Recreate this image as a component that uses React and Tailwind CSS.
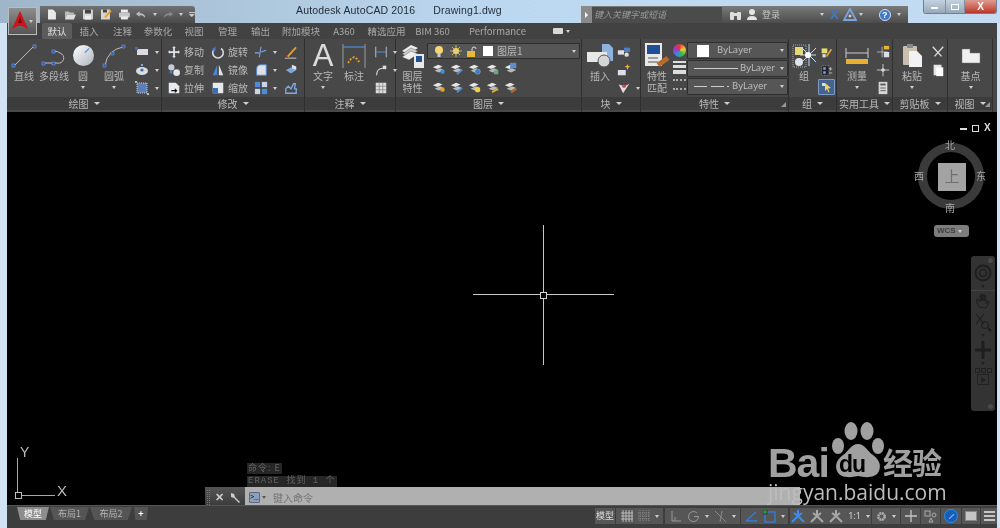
import React from 'react';

const cjk = { fontFamily: '"Noto Sans CJK SC", sans-serif' };

// ---- small drawn icons (all on a 16 unit box) ----
function Ico({ s = 16, children, className = '' }) {
  return (
    <svg width={s} height={s} viewBox="0 0 16 16" fill="none" className={`shrink-0 ${className}`}>
      {children}
    </svg>
  );
}

const stack = <><path d="M1 6l6-3 5 2-6 3z" fill="#e8e8e8" /><path d="M3 10l6-3 5 2-6 3z" fill="#bbb" /></>;

const icons = {
  rect: <><rect x="3" y="5" width="11" height="6" fill="#d8dde4" /><rect x="1" y="3" width="3" height="3" fill="#2f6fd0" /></>,
  ellipse: <><ellipse cx="8" cy="9" rx="6" ry="4" fill="#d8dde4" /><circle cx="8" cy="8" r="1.600" fill="#3d6fb8" /><rect x="7" y="2" width="2" height="2" fill="#7fa8e8" /></>,
  hatch: <><rect x="3" y="3" width="10" height="10" fill="#5c7fb8" stroke="#ccc" strokeDasharray="1 1" /><rect x="1" y="1" width="2" height="2" fill="#bbb" /><rect x="13" y="13" width="2" height="2" fill="#bbb" /></>,
  move: <path d="M8 1l2 2.500H9V7h3.500V6L15 8l-2.500 2V9H9v3.500h1L8 15l-2-2.500h1V9H3.500v1L1 8l2.500-2v1H7V3.500H6z" fill="#dfe4ea" />,
  rotate: <><path d="M11.500 4a6 6 0 1 1-7 0" stroke="#d5d9de" strokeWidth="1.800" /><path d="M5 1.500v5h-4z" fill="#3f7fd8" /></>,
  copy: <><circle cx="5" cy="5" r="3.500" fill="#c5ccd6" /><circle cx="11" cy="11" r="3.800" fill="#e3e6ea" /><rect x="3" y="9" width="3" height="3" fill="#3f7fd8" /></>,
  mirror: <><path d="M7 2v12H2z" fill="#4d86cf" /><path d="M9 2v12h5z" fill="#dfe3e8" /></>,
  stretch: <><path d="M2 2h8l4 4v8H2z" fill="#e8eaee" /><path d="M5 11h6m-2-2l2 2-2 2" stroke="#111" strokeWidth="1.300" /></>,
  scale: <><rect x="2" y="2" width="12" height="12" fill="#e5e8ec" /><rect x="2" y="8" width="6" height="6" fill="#3a6fb8" /></>,
  trim: <path d="M1 9h5M8 8l6-2M8 2l-2 12" stroke="#7ea9e6" strokeWidth="1.200" />,
  fillet: <path d="M3 14V7q0-5 5-5h6v12z" fill="#dde1e6" stroke="#4d86cf" />,
  array: <><rect x="1" y="1" width="6" height="6" fill="#4d8bdc" /><rect x="9" y="1" width="6" height="6" fill="#c8d5e6" /><rect x="1" y="9" width="6" height="6" fill="#c8d5e6" /><rect x="9" y="9" width="6" height="6" fill="#4d8bdc" /></>,
  eraser: <><path d="M3 13L13 2l1.500 1.500L5 14z" fill="#e6a23c" /><path d="M1 15h13" stroke="#ddd" /><path d="M2 11l3 3-3 .5z" fill="#a33" /></>,
  explode: <><path d="M2 8l6-3 6 3-6 4z" fill="#7ba7dc" /><path d="M9 2l5 2v4l-5-2z" fill="#dfe3e8" /></>,
  offset: <path d="M2 14V9l3-3 3 3 3-6h2l-1 6h2v5z" fill="none" stroke="#7ea9e6" strokeWidth="1.500" />,
  dimSmall: <><path d="M2 2v12M14 2v12" stroke="#ccc" /><path d="M2 8h12" stroke="#4d8bdc" strokeWidth="1.200" /></>,
  leader: <><path d="M3 14c0-6 3-8 7-8" stroke="#ddd" strokeWidth="1.200" /><rect x="10" y="3" width="4" height="4" fill="#ddd" /></>,
  table: <><rect x="2" y="2" width="12" height="12" fill="#ddd" /><path d="M2 6h12M2 10h12M6 2v12M10 2v12" stroke="#777" strokeWidth=".7" /></>,
  layerBlue: <>{stack}<circle cx="12" cy="11" r="2.500" fill="#3f8fe0" /></>,
  layerPen: <>{stack}<path d="M8 14l6-5" stroke="#4d8bdc" strokeWidth="2" /></>,
  layerGear: <>{stack}<circle cx="11" cy="11" r="3" fill="#3f78c4" stroke="#9cc" strokeDasharray="1 1" /></>,
  layerLock: <>{stack}<rect x="9" y="9" width="5" height="5" fill="#6fa38a" /></>,
  layerDoc: <>{stack}<rect x="7" y="1" width="7" height="6" fill="#5b8fd0" /></>,
  layerOrange: <>{stack}<circle cx="12" cy="11" r="2.500" fill="#f0a020" /></>,
  layerSun: <>{stack}<circle cx="11" cy="11" r="3" fill="#f2d040" /></>,
  layerKey: <>{stack}<path d="M7 14l5-3h2" stroke="#e8b020" strokeWidth="2" /></>,
  layerBrush: <>{stack}<path d="M8 14l6-4" stroke="#b8682a" strokeWidth="2.500" /></>,
  insert1: <><rect x="1" y="6" width="7" height="5" fill="#dde" /><rect x="8" y="3" width="7" height="5" fill="#4d7fc0" /><circle cx="11" cy="11" r="2.500" fill="#ddd" /></>,
  insert2: <><rect x="1" y="8" width="9" height="6" fill="#dde" /><path d="M12 1l1 2.500L15.500 4 13 5l-1 3-1-3-2.500-1L11 3.500z" fill="#f0b030" /></>,
  insert3: <><path d="M2 4l5 10 7-11-5 3z" fill="#ddd" /><circle cx="8" cy="6" r="2" fill="#d44" /></>,
  groupEdit: <><rect x="2" y="3" width="7" height="6" fill="#e8d870" /><rect x="3" y="10" width="4" height="4" fill="#ddd" /><path d="M8 13l6-9" stroke="#e6a23c" strokeWidth="2" /></>,
  groupPlus: <><rect x="2" y="2" width="9" height="12" fill="#223" stroke="#999" strokeDasharray="1 1" /><rect x="4" y="4" width="3" height="3" fill="#8ab" /><rect x="4" y="9" width="3" height="3" fill="#8ab" /><path d="M11 6h4M13 4v4M11 11h4" stroke="#ccc" /></>,
  idPoint: <><path d="M1 8h12M7 2v12" stroke="#bbb" /><rect x="9" y="1" width="6" height="4" fill="#f0b030" /><rect x="9" y="8" width="6" height="6" fill="#dde" /></>,
  point: <><path d="M8 1v14M1 8h14" stroke="#bbb" strokeWidth="1.200" /><circle cx="8" cy="8" r="2" fill="#ddd" /></>,
  calc: <><rect x="3" y="1" width="10" height="14" fill="#d5d5d5" /><rect x="5" y="3" width="6" height="2" fill="#555" /><path d="M5 8h6M5 11h6" stroke="#555" /></>,
  scissors: <path d="M2 2l10 11M14 2L4 13" stroke="#dcdcdc" strokeWidth="1.500" />,
  paste: <><rect x="3" y="2" width="9" height="12" fill="#e5e5e5" /><rect x="6" y="5" width="8" height="10" fill="#fff" /></>,
};

function Small({ name, arrow, s = 16, className = '' }) {
  return (
    <div className={`flex items-center gap-[5px] h-[18px] ${className}`}>
      <Ico s={s}>{icons[name]}</Ico>
      {arrow && <Drop />}
    </div>
  );
}

const Drop = ({ className = '' }) => (
  <span className={`w-0 h-0 border-x-[2.500px] border-x-transparent border-t-[3px] border-t-[#cfcfcf] ${className}`} />
);

function Label({ children, className = '' }) {
  return <span style={cjk} className={`text-[10px] leading-[12px] text-[#b9b9b9] whitespace-nowrap ${className}`}>{children}</span>;
}

function Big({ label, w, arrow, icon }) {
  return (
    <div className="flex flex-col items-center shrink-0" style={{ width: w }}>
      <div className="h-[27px] flex items-center justify-center">{icon}</div>
      <Label className="mt-[1px] text-center">{label}</Label>
      {arrow && <Drop className="mt-[4px]" />}
    </div>
  );
}

function Panel({ w, title, corner, children, className = '' }) {
  return (
    <div className="flex flex-col shrink-0 h-full border-r border-[#2f2f2f]" style={{ width: w }}>
      <div className={`h-[58px] flex pt-[3px] ${className}`}>{children}</div>
      <div className="relative h-[13px] bg-[#3c3c3c] flex items-center justify-center gap-[5px]">
        <Label>{title}</Label>
        <span className="w-0 h-0 border-x-[3px] border-x-transparent border-t-[3px] border-t-[#d0d0d0]" />
        {corner && <span className="absolute right-[2px] bottom-[3px] w-[5px] h-[5px] bg-[#999] [clip-path:polygon(100%_0,100%_100%,0_100%)]" />}
      </div>
    </div>
  );
}

function Combo({ w, h = 16, children, className = '' }) {
  return (
    <div className={`flex items-center justify-between px-[3px] rounded-[1px] border border-[#2e2e2e] bg-[#565656] ${className}`} style={{ width: w, height: h }}>
      <div className="flex items-center gap-[4px] min-w-0 grow">{children}</div>
      <Drop className="ml-[2px]" />
    </div>
  );
}

const tabs = [
  ['默认', 30], ['插入', 34], ['注释', 33], ['参数化', 38], ['视图', 34], ['管理', 33], ['输出', 33],
  ['附加模块', 48], ['A360', 38], ['精选应用', 47], ['BIM 360', 45], ['Performance', 85],
];

function TitleBar() {
  return (
    <div className="h-[23px] flex items-start bg-gradient-to-r from-[#9fb6ca] via-[#bcd8f0] to-[#c3dcf2] shrink-0 pt-[6px]">
      <div className="ml-[40px] w-[155px] h-[17px] flex items-center gap-[6px] pl-[6px] bg-gradient-to-b from-[#717171] to-[#4a4a4a] rounded-tr-[3px]">
        <svg width="13" height="13" viewBox="0 0 12 12"><path d="M2 1h5l3 3v7H2z" fill="#e9e9e9" /></svg>
        <svg width="13" height="13" viewBox="0 0 12 12"><path d="M1 3h4l1 1h4v2H3l-2 5z" fill="#bcbcbc" /><path d="M3 6h9l-2 5H1z" fill="#ddd" /></svg>
        <svg width="13" height="13" viewBox="0 0 12 12"><rect x="1" y="1" width="10" height="10" rx="1" fill="#d5d5d5" /><rect x="3" y="1" width="6" height="4" fill="#444" /><rect x="3" y="7" width="6" height="4" fill="#eee" /></svg>
        <svg width="13" height="13" viewBox="0 0 12 12"><rect x="1" y="1" width="9" height="10" fill="#d5d5d5" /><rect x="3" y="1" width="4" height="3" fill="#444" /><path d="M5 9l6-7" stroke="#e8a030" strokeWidth="2" /></svg>
        <svg width="14" height="13" viewBox="0 0 13 12"><rect x="3" y="1" width="7" height="3" fill="#eee" /><rect x="1" y="4" width="11" height="5" rx="1" fill="#c8c8c8" /><rect x="3" y="8" width="7" height="3" fill="#eee" /></svg>
        <svg width="11" height="10" viewBox="0 0 11 10"><path d="M4 1L0 4l4 3V5q4 0 6 3 0-5-6-5z" fill="#bdbdbd" /></svg>
        <Drop />
        <svg width="11" height="10" viewBox="0 0 11 10"><path d="M7 1l4 3-4 3V5Q3 5 1 8q0-5 6-5z" fill="#888" /></svg>
        <Drop />
        <span className="w-[7px] flex flex-col gap-[1px]"><span className="h-[1px] bg-[#ccc]" /><span className="h-[3px] bg-[#ccc] [clip-path:polygon(0_0,100%_0,50%_100%)]" /></span>
      </div>
      <div className="ml-[101px] -mt-[3px] w-[285px] h-[16px] flex items-center text-[10.500px] tracking-[.15px] text-[#1f2a36] font-['Liberation_Sans',sans-serif] whitespace-nowrap">
        <span>Autodesk AutoCAD 2016</span>
        <span className="ml-[18px]">Drawing1.dwg</span>
      </div>
      <div className="w-[327px] h-[17px] flex items-center bg-gradient-to-b from-[#7a7a7a] to-[#4c4c4c]">
        <span className="w-[11px] h-full flex items-center justify-center bg-[#8a8a8a]">
          <span className="w-0 h-0 border-y-[3px] border-y-transparent border-l-[3px] border-l-white" />
        </span>
        <span style={cjk} className="w-[130px] h-[16px] bg-[#4b4b4b] pl-[2px] text-[9px] leading-[16px] italic text-[#9a9a9a]">键入关键字或短语</span>
        <svg className="ml-[7px]" width="13" height="12" viewBox="0 0 13 12"><rect x="1" y="3" width="4" height="8" rx="1" fill="#ddd" /><rect x="8" y="3" width="4" height="8" rx="1" fill="#ddd" /><rect x="5" y="4" width="3" height="3" fill="#ddd" /></svg>
        <svg className="ml-[4px]" width="12" height="13" viewBox="0 0 12 13"><circle cx="6" cy="4" r="3" fill="#e5e5e5" /><path d="M1 12q0-4 5-4t5 4z" fill="#e5e5e5" /></svg>
        <span style={cjk} className="ml-[4px] text-[9px] text-[#c5c5c5]">登录</span>
        <Drop className="ml-[40px]" />
        <span className="ml-[6px] text-[13px] leading-none font-bold text-[#3f78c4] font-['Liberation_Sans',sans-serif]">X</span>
        <svg className="ml-[4px]" width="14" height="13" viewBox="0 0 14 13"><path d="M7 1l6 11H1z" fill="none" stroke="#7aa4dc" strokeWidth="1.800" /><circle cx="7" cy="8" r="1.500" fill="#ccc" /></svg>
        <Drop className="ml-[2px]" />
        <span className="ml-[16px] w-[12px] h-[12px] rounded-full bg-[#3f78c4] border border-[#cfe0f5] text-[9px] leading-[10px] text-center font-bold text-white font-['Liberation_Sans',sans-serif]">?</span>
        <Drop className="ml-[6px]" />
      </div>
      <div className="ml-[15px] -mt-[6px] w-[74px] h-[14px] flex rounded-b-[3px] border border-t-0 border-[#6f7f90] overflow-hidden">
        <span className="w-[21px] flex items-center justify-center bg-gradient-to-b from-[#c3d2e0] to-[#97a8b8]"><span className="w-[7px] h-[2px] mt-[3px] bg-white" /></span>
        <span className="w-[20px] flex items-center justify-center bg-gradient-to-b from-[#c3d2e0] to-[#97a8b8] border-x border-[#7f8f9f]"><span className="w-[8px] h-[6px] border border-white" /></span>
        <span style={{ fontFamily: '"Liberation Sans", sans-serif' }} className="grow text-center text-[10px] leading-[13px] font-bold text-white bg-gradient-to-b from-[#e09a90] to-[#b8352a]">X</span>
      </div>
    </div>
  );
}

function Ribbon() {
  return (
    <div className="h-[73px] flex bg-[#484848] shrink-0">
      <Panel w={155} title="绘图" className="pl-[2px]">
        <Big w={30} label="直线" icon={<svg width="26" height="26" viewBox="0 0 26 26"><path d="M3 23L23 3" stroke="#bcbcbc" /><rect x="1" y="21" width="3" height="3" fill="#2a5ca8" stroke="#7fa8e8" strokeWidth=".5" /><rect x="22" y="2" width="3" height="3" fill="#2a5ca8" stroke="#7fa8e8" strokeWidth=".5" /></svg>} />
        <Big w={30} label="多段线" icon={<svg width="26" height="22" viewBox="0 0 26 22"><path d="M2 18h14a5 5 0 0 0 3-10q-2-2-7-2" stroke="#bcbcbc" fill="none" /><rect x="1" y="17" width="3" height="3" fill="#2a5ca8" stroke="#7fa8e8" strokeWidth=".5" /><rect x="11" y="17" width="3" height="3" fill="#2a5ca8" stroke="#7fa8e8" strokeWidth=".5" /><rect x="11" y="5" width="3" height="3" fill="#2a5ca8" stroke="#7fa8e8" strokeWidth=".5" /></svg>} />
        <Big w={28} label="圆" arrow icon={<span className="relative w-[21px] h-[21px] rounded-full bg-gradient-to-br from-white to-[#aeb5bf]"><span className="absolute left-[11px] top-[5px] w-[6px] h-[1px] bg-[#4d86cf] -rotate-45" /></span>} />
        <Big w={34} label="圆弧" arrow icon={<svg width="24" height="24" viewBox="0 0 24 24"><path d="M3 22Q5 6 21 3" stroke="#bcbcbc" fill="none" /><rect x="1" y="20" width="3" height="3" fill="#2a5ca8" stroke="#7fa8e8" strokeWidth=".5" /><rect x="9" y="8" width="3" height="3" fill="#2a5ca8" stroke="#7fa8e8" strokeWidth=".5" /><rect x="20" y="1" width="3" height="3" fill="#2a5ca8" stroke="#7fa8e8" strokeWidth=".5" /></svg>} />
        <div className="ml-[3px] flex flex-col pt-[1px]">
          <Small name="rect" arrow /><Small name="ellipse" arrow /><Small name="hatch" arrow />
        </div>
      </Panel>
      <Panel w={143} title="修改" className="pl-[5px]">
        <div className="w-[44px] flex flex-col pt-[1px]">
          {[['move', '移动'], ['copy', '复制'], ['stretch', '拉伸']].map(([i, t]) => (
            <div key={t} className="flex items-center gap-[3px] h-[18px]"><Ico s={14}>{icons[i]}</Ico><Label>{t}</Label></div>
          ))}
        </div>
        <div className="w-[43px] flex flex-col pt-[1px]">
          {[['rotate', '旋转'], ['mirror', '镜像'], ['scale', '缩放']].map(([i, t]) => (
            <div key={t} className="flex items-center gap-[3px] h-[18px]"><Ico s={14}>{icons[i]}</Ico><Label>{t}</Label></div>
          ))}
        </div>
        <div className="w-[30px] flex flex-col pt-[1px]">
          <Small name="trim" s={14} arrow /><Small name="fillet" s={14} arrow /><Small name="array" s={14} arrow />
        </div>
        <div className="flex flex-col pt-[1px]">
          <Small name="eraser" s={14} /><Small name="explode" s={14} /><Small name="offset" s={14} />
        </div>
      </Panel>
      <Panel w={91} title="注释" className="pl-[3px]">
        <Big w={30} label="文字" arrow icon={<span className="text-[31px] leading-[27px] text-[#dcdcdc] font-['Liberation_Sans',sans-serif]">A</span>} />
        <Big w={32} label="标注" icon={<svg width="24" height="26" viewBox="0 0 24 26"><path d="M1 1v24M23 1v24" stroke="#9a9a9a" /><path d="M1 4h22" stroke="#4d8bdc" strokeWidth="1.200" /><path d="M6 20l3-4 3-2 3 2 3 4" stroke="#f0a020" strokeWidth="1.800" strokeDasharray="2 1.500" fill="none" /></svg>} />
        <div className="ml-[4px] flex flex-col pt-[1px]">
          <Small name="dimSmall" s={14} arrow /><Small name="leader" s={14} arrow /><Small name="table" s={14} />
        </div>
      </Panel>
      <Panel w={186} title="图层" className="pl-[2px]">
        <div className="w-[29px] flex flex-col items-center shrink-0">
          <div className="h-[27px] flex items-center">
            <svg width="24" height="26" viewBox="0 0 24 26"><path d="M1 8l9-6 7 3-9 6z" fill="#eee" /><path d="M1 11l9-6 7 3-9 6z" fill="#cfcfcf" stroke="#444" strokeWidth=".4" /><path d="M1 14l9-6 7 3-9 6z" fill="#eee" stroke="#444" strokeWidth=".4" /><rect x="13" y="11" width="10" height="14" fill="#e8e8e8" /><rect x="15" y="13" width="6" height="6" fill="#1f4f96" /></svg>
          </div>
          <Label className="mt-[1px]">图层</Label><Label>特性</Label>
        </div>
        <div className="flex flex-col">
          <Combo w={153} className="mt-[1px]">
            <svg width="10" height="13" viewBox="0 0 10 13" className="ml-[3px]"><circle cx="5" cy="5" r="4" fill="#f4d773" /><rect x="3.500" y="9" width="3" height="3" fill="#ccc" /></svg>
            <svg className="ml-[2px]" width="12" height="12" viewBox="0 0 12 12"><circle cx="6" cy="6" r="3" fill="#f4d773" /><path d="M6 0v12M0 6h12M2 2l8 8M10 2l-8 8" stroke="#e6c860" strokeWidth=".8" /></svg>
            <svg width="11" height="11" viewBox="0 0 11 11"><rect x="1" y="5" width="8" height="6" fill="#e8b838" /><path d="M6 5V3q0-2 2-2t2 2" stroke="#ddd" fill="none" /></svg>
            <span className="ml-[2px] w-[10px] h-[10px] bg-white" />
            <Label>图层1</Label>
          </Combo>
          <div className="ml-[4px] mt-[1px] flex gap-x-[2px] flex-wrap w-[90px]">
            {['layerBlue', 'layerPen', 'layerGear', 'layerLock', 'layerDoc', 'layerOrange', 'layerPen', 'layerSun', 'layerKey', 'layerBrush'].map((n, i) => (
              <span key={i} className="w-[16px] h-[18px] flex items-center justify-center"><Ico s={14}>{icons[n]}</Ico></span>
            ))}
          </div>
        </div>
      </Panel>
      <Panel w={59} title="块" className="pl-[3px]">
        <Big w={30} label="插入" icon={<svg width="28" height="26" viewBox="0 0 28 26"><path d="M16 1h7l4 4v13H16z" fill="#8fb3de" /><rect x="1" y="9" width="20" height="10" fill="#e8e8e8" /><circle cx="18" cy="18" r="6" fill="#d5d5d5" stroke="#555" /></svg>} />
        <div className="ml-[2px] flex flex-col pt-[1px]">
          <Small name="insert1" s={14} /><Small name="insert2" s={14} /><Small name="insert3" s={14} arrow />
        </div>
      </Panel>
      <Panel w={148} title="特性" corner className="pl-[2px]">
        <div className="w-[28px] flex flex-col items-center shrink-0">
          <div className="h-[27px] flex items-center">
            <svg width="26" height="27" viewBox="0 0 26 27"><rect x="1" y="1" width="17" height="23" fill="#e8e8e8" /><rect x="3" y="3" width="13" height="9" fill="#1f4f96" /><path d="M4 16h10M4 20h10" stroke="#555" /><path d="M14 23l10-7" stroke="#b8682a" strokeWidth="5" /></svg>
          </div>
          <Label className="mt-[1px]">特性</Label><Label>匹配</Label>
        </div>
        <div className="w-[17px] flex flex-col items-center">
          <span className="mt-[2px] w-[13px] h-[13px] rounded-full bg-[conic-gradient(#e33,#ec3,#3b4,#38d,#a3c,#e33)]" />
          <span className="mt-[4px] w-[13px] h-[13px] flex flex-col justify-between"><span className="h-[2px] bg-[#ddd]" /><span className="h-[3px] bg-[#ddd]" /><span className="h-[4px] bg-[#ddd]" /></span>
          <span className="mt-[5px] w-[13px] h-[11px] border-y-2 border-dotted border-[#aaa]" />
        </div>
        <div className="flex flex-col gap-[1px]">
          <Combo w={101} h={17}>
            <span className="ml-[6px] w-[12px] h-[12px] bg-white" />
            <span className="ml-[4px] text-[9.500px] text-[#c0c0c0] font-['Open_Sans',sans-serif]">ByLayer</span>
          </Combo>
          <Combo w={101} h={17}>
            <span className="ml-[3px] w-[44px] h-[1px] bg-[#ccc]" />
            <span className="text-[9.500px] text-[#c0c0c0] font-['Open_Sans',sans-serif] -ml-[2px]">ByLayer</span>
          </Combo>
          <Combo w={101} h={17}>
            <span className="ml-[3px] w-[13px] h-[1px] bg-[#ccc]" />
            <span className="w-[13px] h-[1px] bg-[#ccc]" />
            <span className="w-[2px] h-[1px] bg-[#ccc] -mx-[1px]" />
            <span className="text-[9.500px] text-[#c0c0c0] font-['Open_Sans',sans-serif]">ByLayer</span>
          </Combo>
        </div>
      </Panel>
      <Panel w={48} title="组" className="pl-[3px]">
        <Big w={24} label="组" icon={<svg width="24" height="26" viewBox="0 0 24 26"><rect x="1" y="2" width="13" height="22" fill="none" stroke="#aaa" strokeDasharray="1 1" /><rect x="3" y="4" width="8" height="8" fill="#e8d870" /><circle cx="7" cy="19" r="4" fill="#dde4ec" /><path d="M17 1v22M8 12h16M10 5l14 14M24 5L10 19" stroke="#bde0ff" strokeWidth="1" /><circle cx="16" cy="12" r="3" fill="#fff" /></svg>} />
        <div className="ml-[2px] flex flex-col items-center pt-[1px]">
          <Small name="groupEdit" s={13} /><Small name="groupPlus" s={13} />
          <span className="w-[17px] h-[16px] flex items-center justify-center rounded-[1px] bg-[#44638f] border border-[#7d9bc5]"><svg width="10" height="11" viewBox="0 0 10 11"><rect x="0" y="1" width="3" height="3" fill="#ddd" /><path d="M3 1l6 5-3 .5 1.500 3.500-1 .5L5 7 3 9z" fill="#f0d060" /></svg></span>
        </div>
      </Panel>
      <Panel w={56} title="实用工具" className="pl-[4px]">
        <Big w={32} label="测量" arrow icon={<svg width="24" height="22" viewBox="0 0 24 22"><path d="M1 3v10M23 3v10" stroke="#ccc" /><path d="M1 8h22" stroke="#ccc" /><rect x="1" y="14" width="22" height="5" fill="#e8b030" /></svg>} />
        <div className="ml-[3px] flex flex-col pt-[1px]">
          <Small name="idPoint" s={14} /><Small name="point" s={14} /><Small name="calc" s={14} />
        </div>
      </Panel>
      <Panel w={55} title="剪贴板" className="pl-[3px]">
        <Big w={32} label="粘贴" arrow icon={<svg width="21" height="25" viewBox="0 0 21 25"><rect x="1" y="3" width="14" height="19" rx="1" fill="#c9bfae" /><rect x="5" y="1" width="6" height="4" fill="#888" /><path d="M7 8h8l5 5v11H7z" fill="#f2f2f2" /></svg>} />
        <div className="ml-[3px] flex flex-col pt-[1px]">
          <Small name="scissors" s={14} /><Small name="paste" s={14} />
        </div>
      </Panel>
      <Panel w={45} title="视图" corner>
        <Big w={45} label="基点" arrow icon={<svg width="20" height="16" viewBox="0 0 20 16"><path d="M1 1h8v4h10v10H1z" fill="#f0f0f0" stroke="#777" strokeWidth=".5" /></svg>} />
      </Panel>
    </div>
  );
}

function Canvas() {
  return (
    <div className="relative grow bg-black overflow-hidden">
      {/* crosshair */}
      <div className="absolute left-[466px] top-[182px] w-[141px] h-[1px] bg-[#c8c8c8]" />
      <div className="absolute left-[536px] top-[113px] w-[1px] h-[140px] bg-[#c8c8c8]" />
      <div className="absolute left-[533px] top-[180px] w-[7px] h-[7px] border border-[#d0d0d0] bg-black" />

      {/* viewport controls */}
      <div className="absolute left-[953px] top-[11px] flex items-center gap-[5px]">
        <span className="w-[7px] h-[2px] mt-[2px] bg-[#ddd]" />
        <span className="w-[7px] h-[7px] border border-[#ddd]" />
        <span style={{ fontFamily: '"Liberation Sans", sans-serif' }} className="text-[10px] leading-none font-bold text-[#ddd]">X</span>
      </div>

      {/* view cube */}
      <div className="absolute left-[911px] top-[31px] w-[66px] h-[66px] rounded-full border-[9px] border-[#3a3a3a]" />
      <div style={cjk} className="absolute left-[931px] top-[51px] w-[28px] h-[28px] bg-[#a3a3a3] text-[#6f6f6f] text-[15px] leading-[26px] text-center">上</div>
      {[['北', 938, 26], ['南', 938, 89], ['西', 907, 57], ['东', 969, 57]].map(([t, x, y]) => (
        <span key={t} style={{ ...cjk, left: x, top: y }} className="absolute text-[10px] leading-[13px] text-[#a5a5a5]">{t}</span>
      ))}
      <div className="absolute left-[927px] top-[113px] w-[35px] h-[12px] flex items-center pl-[3px] gap-[2px] rounded-[3px] bg-[#7d7d7d] text-[8px] font-bold text-[#3f3f3f] font-['Liberation_Sans',sans-serif]">
        WCS<Drop />
      </div>

      {/* navigation bar */}
      <div className="absolute left-[964px] top-[144px] w-[24px] h-[155px] rounded-[3px] bg-[#333] flex flex-col items-center text-[#1e1e1e]">
        <span className="self-end mr-[2px] mt-[2px] w-[5px] h-[5px] rounded-full bg-[#4a4a4a]" />
        <svg className="mt-[1px]" width="18" height="18" viewBox="0 0 18 18"><circle cx="9" cy="9" r="7.500" fill="none" stroke="currentColor" strokeWidth="2" /><circle cx="9" cy="9" r="3.500" fill="none" stroke="currentColor" strokeWidth="1.500" /></svg>
        <Drop className="mt-[3px] !border-t-[#222]" />
        <span className="mt-[2px] w-full h-[1px] bg-[#444]" />
        <svg className="mt-[1px]" width="18" height="18" viewBox="0 0 18 18"><path d="M5 15L2 8l2-1 2 3V3h1.500v6V2h1.500v7V3h1.500v6V4H12v8l2-3 1.500 1L12 16z" fill="none" stroke="currentColor" /></svg>
        <svg className="mt-[1px]" width="18" height="22" viewBox="0 0 18 22"><path d="M2 3l8 10M10 3l-8 10" stroke="currentColor" strokeWidth="1.200" /><circle cx="11" cy="14" r="3.500" fill="none" stroke="currentColor" /><path d="M14 17l3 3" stroke="currentColor" strokeWidth="2" /></svg>
        <Drop className="mt-[1px] !border-t-[#222]" />
        <svg className="mt-[3px]" width="18" height="20" viewBox="0 0 18 20"><path d="M9 1v18M1 10h16" stroke="currentColor" strokeWidth="3" /></svg>
        <Drop className="mt-[2px] !border-t-[#222]" />
        <span className="mt-[3px] flex gap-[1px]"><span className="w-[5px] h-[5px] border border-[#222]" /><span className="w-[5px] h-[5px] border border-[#222]" /><span className="w-[5px] h-[5px] border border-[#222]" /></span>
        <span className="mt-[1px] w-[12px] h-[11px] border border-[#222] flex items-center justify-center"><span className="w-0 h-0 border-y-[3px] border-y-transparent border-l-[5px] border-l-[#222]" /></span>
        <span className="mt-auto mb-[2px] self-end mr-[2px] w-[5px] h-[5px] rounded-full bg-[#4a4a4a]" />
      </div>

      {/* UCS icon */}
      <div className="absolute left-[10px] top-[346px] w-[1px] h-[38px] bg-[#a8a8a8]" />
      <div className="absolute left-[10px] top-[383px] w-[38px] h-[1px] bg-[#a8a8a8]" />
      <div className="absolute left-[8px] top-[380px] w-[7px] h-[7px] border border-[#c0c0c0] bg-black" />
      <span className="absolute left-[13px] top-[333px] text-[14px] leading-[14px] text-[#bdbdbd] font-['Liberation_Sans',sans-serif]">Y</span>
      <span className="absolute left-[50px] top-[371px] text-[15px] leading-[15px] text-[#bdbdbd] font-['Liberation_Sans',sans-serif]">X</span>

      {/* command history */}
      <div style={cjk} className="absolute left-[240px] top-[351px] flex flex-col items-start gap-[2px] text-[9px] leading-[10px] text-[#636363] tracking-[1px]">
        <span className="bg-[#262626] px-[1px] h-[11px]">命令: E</span>
        <span className="bg-[#262626] px-[1px] h-[11px] font-['Liberation_Mono','Noto_Sans_CJK_SC',monospace]">ERASE 找到 1 个</span>
      </div>

      {/* command line */}
      <div className="absolute left-[198px] top-[375px] w-[595px] h-[20px] flex">
        <div className="w-[40px] flex items-center gap-[5px] pl-[2px] bg-gradient-to-b from-[#555] to-[#3a3a3a]">
          <span className="w-[3px] h-[15px] border-x border-dotted border-[#777]" />
          <span className="text-[11px] leading-none font-bold text-[#ccc] font-['Liberation_Sans',sans-serif]">✕</span>
          <svg width="12" height="12" viewBox="0 0 12 12"><path d="M2 2l3 1 1 3 5 5-1 1-5-5-3-1z" fill="#ccc" /></svg>
        </div>
        <div className="grow flex items-center pl-[4px] bg-[#b0b0b0]">
          <span className="w-[11px] h-[11px] rounded-[1px] bg-[#8ba0c0] border border-[#667] text-[7px] leading-[8px] text-black font-['Liberation_Mono',monospace]">&gt;_</span>
          <Drop className="ml-[2px] !border-t-[#555]" />
          <span style={cjk} className="ml-[7px] text-[10px] text-[#737373]">键入命令</span>
        </div>
      </div>

      {/* watermark */}
      <div className="absolute left-[761px] top-[310px] w-[185px] h-[83px] text-[#a0a0a0]">
        <span className="absolute left-0 top-[18px] text-[41px] leading-[46px] font-bold tracking-[-1px] font-['Liberation_Sans',sans-serif]">Bai</span>
        <svg className="absolute left-[64px] top-0" width="52" height="58" viewBox="0 0 52 58" fill="#a0a0a0">
          <ellipse cx="19" cy="9" rx="6.500" ry="9" /><ellipse cx="35" cy="9" rx="6.500" ry="9" />
          <ellipse cx="6" cy="24" rx="6" ry="8" /><ellipse cx="46" cy="24" rx="6" ry="8" />
          <path d="M26 22c7 0 9 7 15 11 7 5 8 11 6 16-3 7-13 7-21 5-8 2-18 2-21-5-2-5-1-11 6-16 6-4 8-11 15-11z" />
        </svg>
        <span className="absolute left-[71px] top-[29px] text-[23px] leading-[26px] font-bold tracking-[-1px] text-black font-['Liberation_Sans',sans-serif]">du</span>
        <span style={cjk} className="absolute left-[115px] top-[17px] text-[30px] leading-[44px] font-bold tracking-[-1px] whitespace-nowrap">经验</span>
        <span className="absolute left-0 top-[57px] text-[21px] leading-[26px] text-[#bdbdbd] whitespace-nowrap font-['Open_Sans',sans-serif]">jingyan.baidu.com</span>
      </div>
    </div>
  );
}

function StatusBar() {
  const box = 'h-[16px] flex items-center justify-center gap-[5px] bg-[#565656] shrink-0';
  const blue = '#2f7fe0';
  const tab = 'h-[13px] [clip-path:polygon(0_0,100%_0,90%_100%,10%_100%)]';
  return (
    <div className="h-[23px] flex items-start bg-[#3d3d3d] border-t border-[#555] shrink-0">
      <div style={cjk} className="flex items-start mt-[1px] ml-[10px] text-[9px] leading-[13px] text-center text-[#b5b5b5]">
        <span className={`${tab} w-[32px] bg-[#8d8d8d] text-white`}>模型</span>
        <span className={`${tab} ml-[1px] w-[39px] bg-[#555]`}>布局1</span>
        <span className={`${tab} ml-[1px] w-[42px] bg-[#555]`}>布局2</span>
        <span className={`${tab} ml-[2px] w-[14px] bg-[#555] text-white font-bold`}>+</span>
      </div>
      <div className="ml-[447px] mt-[2px] flex gap-[1px] items-start">
        <span style={cjk} className={`${box} w-[20px] text-[9px] text-[#ddd] bg-[#6a6a6a]`}>模型</span>
        <div className={`${box} w-[47px]`}>
          <svg width="12" height="12" viewBox="0 0 12 12"><path d="M2 0v12M5 0v12M8 0v12M11 0v12M0 3h12M0 6h12M0 9h12" stroke="#bbb" /></svg>
          <svg width="12" height="12" viewBox="0 0 12 12"><path d="M2 0v12M5 0v12M8 0v12M11 0v12M0 3h12M0 6h12M0 9h12" stroke="#8a8a8a" strokeDasharray="1 1" /></svg>
          <Drop />
        </div>
        <div className={`${box} ml-[1px] w-[75px]`}>
          <svg width="12" height="12" viewBox="0 0 12 12"><path d="M2 1v10h9M5 7v4" stroke="#999" fill="none" /></svg>
          <svg width="13" height="13" viewBox="0 0 13 13"><path d="M10 3a5 5 0 1 0 1.500 3.500H7" stroke="#999" fill="none" /></svg>
          <Drop />
          <svg width="13" height="13" viewBox="0 0 13 13"><path d="M1 1l11 11M8 1L6 12" stroke="#8a8a8a" /></svg>
          <Drop />
        </div>
        <div className={`${box} w-[47px]`}>
          <svg width="13" height="12" viewBox="0 0 13 12"><path d="M1 11l10-9M1 11h11" stroke={blue} strokeWidth="1.300" fill="none" /></svg>
          <svg width="13" height="13" viewBox="0 0 13 13"><rect x="2" y="2" width="10" height="10" stroke={blue} strokeWidth="1.300" fill="none" /><rect x="0" y="0" width="4" height="4" fill="#2c9a3c" stroke="#111" strokeWidth=".5" /></svg>
          <Drop />
        </div>
        <div className={`${box} ml-[1px] w-[81px]`}>
          {['#3a8cf0', '#a8a8a8', '#a8a8a8'].map((c, i) => (
            <svg key={i} width="14" height="14" viewBox="0 0 14 14"><path d="M7 1v6L1 13M7 7l6 6M7 7L3 4M7 7l4-3" stroke={c} strokeWidth="2" fill="none" /></svg>
          ))}
          <span className="text-[9px] text-[#ddd] font-['Open_Sans',sans-serif]">1:1</span>
          <Drop />
        </div>
        <div className={`${box} w-[28px]`}>
          <svg width="11" height="11" viewBox="0 0 11 11"><circle cx="5.500" cy="5.500" r="3.200" stroke="#aaa" strokeWidth="2.500" strokeDasharray="2 .5" fill="none" /></svg>
          <Drop />
        </div>
        <div className={`${box} w-[19px]`}><svg width="12" height="12" viewBox="0 0 12 12"><path d="M6 0v12M0 6h12" stroke="#c5c5c5" strokeWidth="1.300" /></svg></div>
        <div className={`${box} w-[19px]`}><svg width="13" height="13" viewBox="0 0 13 13"><rect x="1" y="1" width="5" height="5" stroke="#aaa" fill="none" /><circle cx="10" cy="5" r="2" stroke="#aaa" fill="none" /><path d="M5 12l2-4 2 4z" stroke="#aaa" fill="none" /></svg></div>
        <div className={`${box} w-[20px]`}><span className="w-[14px] h-[14px] rounded-full bg-[#155fb8] border border-[#2f8ae8] flex items-center justify-center"><span className="w-[7px] h-[1px] bg-[#8fc0f0] -rotate-45" /></span></div>
        <div className={`${box} w-[18px]`}><span className="w-[12px] h-[10px] bg-[#c5c5c5] border border-[#888]" /></div>
        <div className={`${box} w-[16px] flex-col !gap-[2px]`}><span className="w-[11px] h-[2px] bg-[#c5c5c5]" /><span className="w-[11px] h-[2px] bg-[#c5c5c5]" /><span className="w-[11px] h-[2px] bg-[#c5c5c5]" /></div>
      </div>
    </div>
  );
}

export default function App() {
  return (
    <div className="relative w-[1000px] h-[528px] overflow-hidden flex flex-col bg-[#cfe3f4] font-['Open_Sans',sans-serif] blur-[0.4px]">
      <TitleBar />
      <div className="flex flex-col grow min-h-0 ml-[7px] mr-[3px]">
        {/* ribbon tabs */}
        <div className="h-[16px] flex pl-[35px] bg-[#424242] shrink-0">
          {tabs.map(([t, w], i) => (
            <span key={t} style={{ ...cjk, width: w }} className={`text-[9.500px] leading-[16px] text-center whitespace-nowrap ${i === 0 ? 'bg-[#5c5c5c] text-[#e0e0e0] rounded-t-[2px]' : 'text-[#a8a8a8]'}`}>{t}</span>
          ))}
          <span className="ml-[13px] mt-[5px] w-[10px] h-[6px] rounded-[1px] bg-[#d8d8d8]" />
          <Drop className="ml-[3px] mt-[7px]" />
        </div>
        <Ribbon />
        <Canvas />
        <StatusBar />
      </div>
      {/* application button */}
      <div className="absolute left-[8px] top-[7px] w-[29px] h-[28px] flex items-center justify-center gap-[1px] bg-gradient-to-b from-[#8e8e8e] to-[#565656] border border-[#bcbcbc]">
        <svg width="16" height="20" viewBox="0 0 16 20"><path d="M8 0L0 18l6-3h4l6 3z" fill="#c8161c" /><path d="M8 6l-2 6h4z" fill="#7a0c10" /></svg>
        <Drop />
      </div>
    </div>
  );
}
